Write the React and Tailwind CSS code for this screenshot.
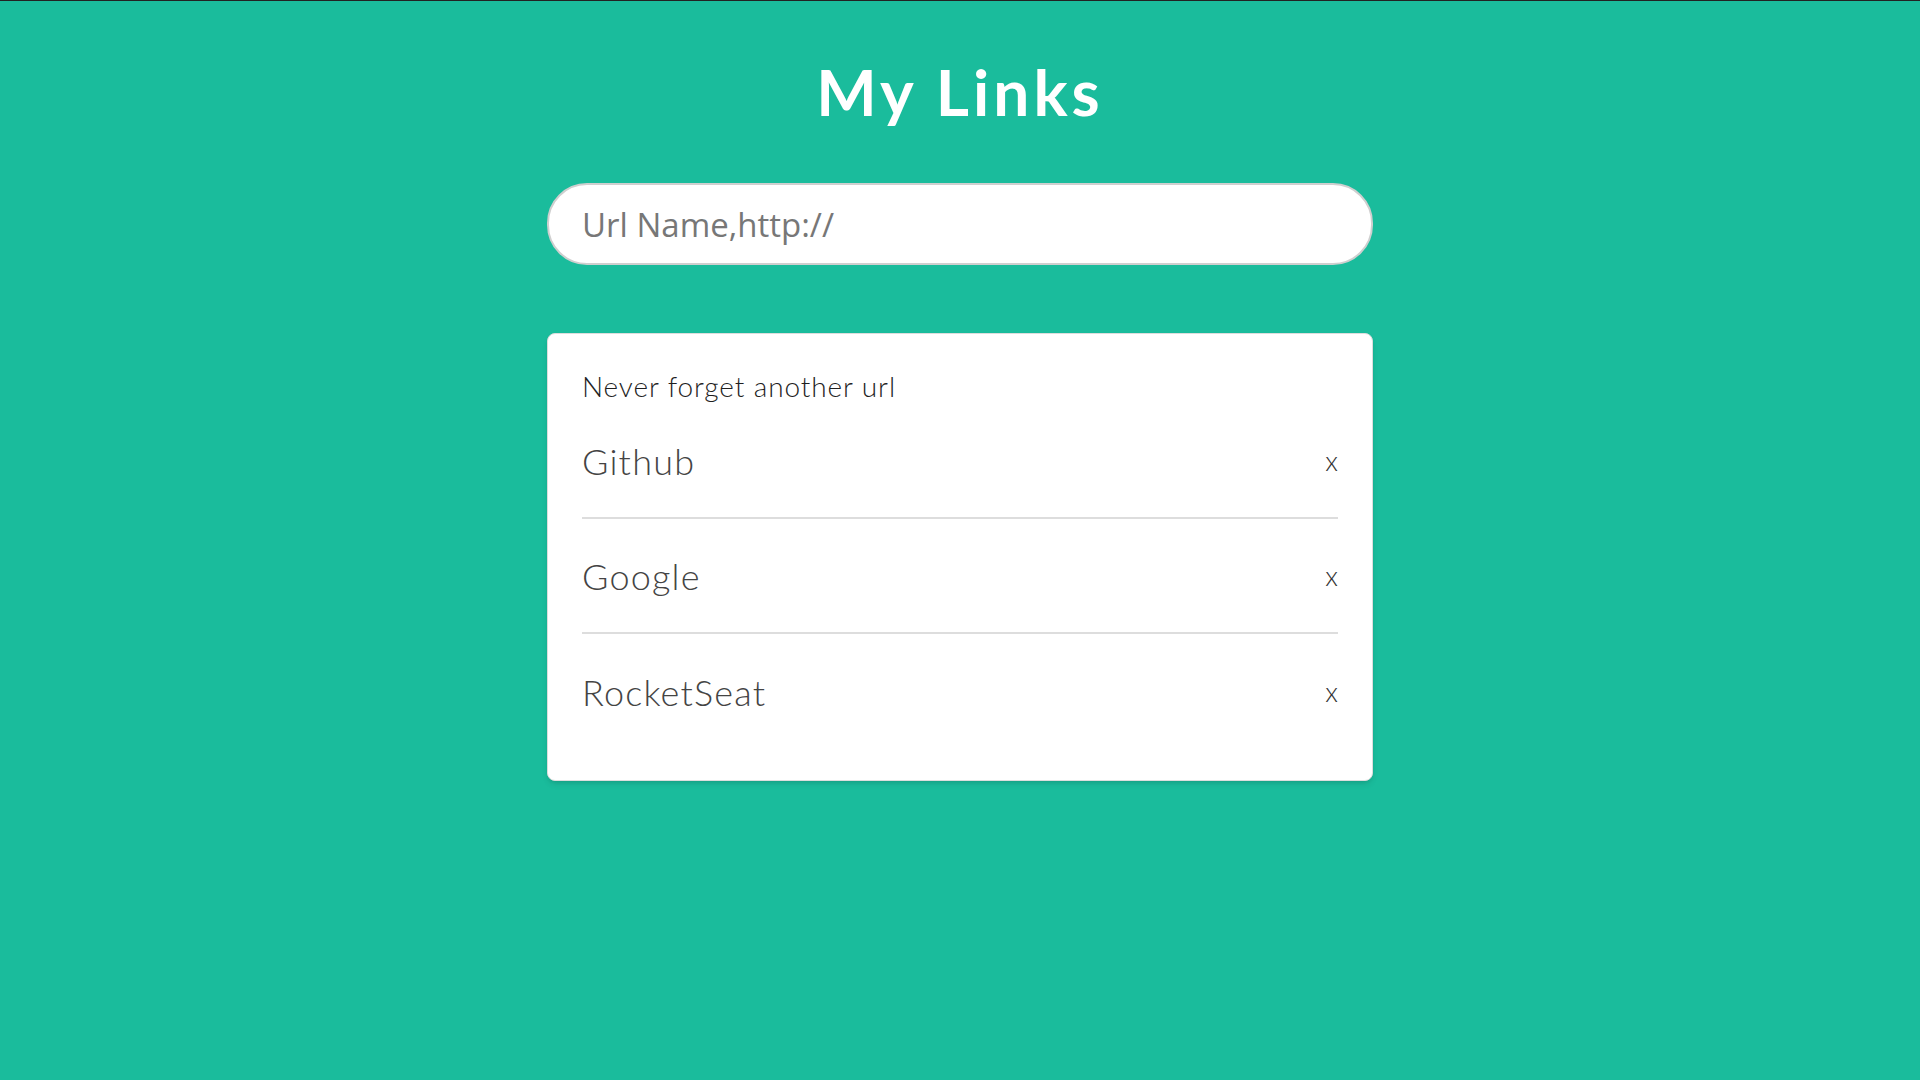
import { useState } from "react";

export default function App() {
  const [links, setLinks] = useState(["Github", "Google", "RocketSeat"]);

  const removeLink = (name) => setLinks(links.filter((l) => l !== name));

  return (
    <div className="min-h-screen bg-[#1abc9c] border-t border-[#222] flex flex-col items-center font-['Lato',sans-serif]">
      {/* Title */}
      <h1 className="mt-[59px] text-white text-[64px] font-bold leading-none tracking-[4px]">
        My Links
      </h1>

      {/* Url input */}
      <input
        type="text"
        placeholder="Url Name,http://"
        className="mt-[59px] w-[826px] h-[82px] rounded-[40px] border-2 border-[#cfcfcf] bg-white px-[33px] text-[33px] text-[#555] placeholder:text-[#777] outline-none font-['Open_Sans',sans-serif]"
      />

      {/* Links card */}
      <div className="mt-[68px] w-[826px] bg-white rounded-lg border border-[#ddd] shadow-md px-[34px] pt-[38px] pb-[31px]">
        <p className="text-[28px] leading-none font-light text-[#1f1f1f] tracking-[0.9px]">Never forget another url</p>
        <ul className="mt-[4px]">
          {links.map((name, i) => (
            <li
              key={name}
              className={`h-[115px] flex items-center justify-between ${
                i < links.length - 1 ? "border-b-2 border-[#ddd]" : ""
              }`}
            >
              <span className="text-[36px] font-light text-[#444] tracking-[1.2px]">{name}</span>
              <button
                className="text-[27px] font-light text-[#333] leading-none"
                onClick={() => removeLink(name)}
              >
                x
              </button>
            </li>
          ))}
        </ul>
      </div>
    </div>
  );
}
